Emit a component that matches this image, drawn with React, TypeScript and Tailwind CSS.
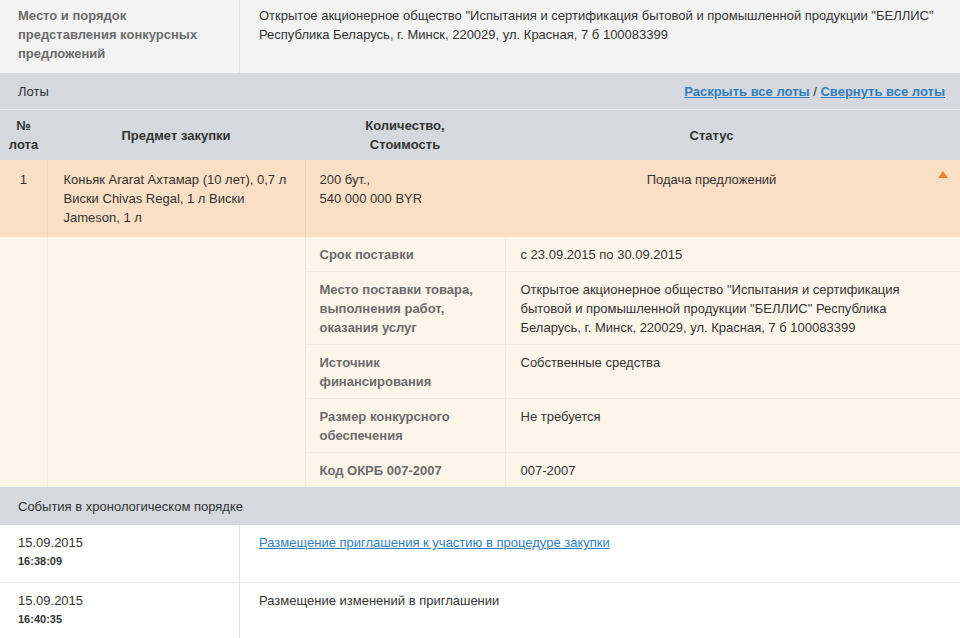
const font = { fontFamily: '"Liberation Sans", Arial, sans-serif' };

const details = [
  { label: "Срок поставки", value: "с 23.09.2015 по 30.09.2015" },
  {
    label: "Место поставки товара, выполнения работ, оказания услуг",
    value:
      'Открытое акционерное общество "Испытания и сертификация бытовой и промышленной продукции "БЕЛЛИС" Республика Беларусь, г. Минск, 220029, ул. Красная, 7 б 100083399',
  },
  { label: "Источник финансирования", value: "Собственные средства" },
  { label: "Размер конкурсного обеспечения", value: "Не требуется" },
  { label: "Код ОКРБ 007-2007", value: "007-2007" },
];

const events = [
  {
    date: "15.09.2015",
    time: "16:38:09",
    text: "Размещение приглашения к участию в процедуре закупки",
    link: true,
  },
  {
    date: "15.09.2015",
    time: "16:40:35",
    text: "Размещение изменений в приглашении",
    link: false,
  },
];

export default function App() {
  return (
    <div className="min-h-[638px] w-[960px] overflow-hidden bg-white text-[13px] leading-[19px] text-[#333]" style={font}>
      {/* place and order row */}
      <div className="flex bg-[#f3f3f3]">
        <div className="w-[240px] shrink-0 border-r border-[#e2e2e2] pl-[18px] pr-[16px] pt-[6px] pb-[10px] font-bold text-[#6b6b6b]">
          Место и порядок представления конкурсных предложений
        </div>
        <div className="flex-1 pl-[19px] pr-[10px] pt-[6px] pb-[10px]">
          Открытое акционерное общество "Испытания и сертификация бытовой и промышленной продукции "БЕЛЛИС"
          <br />
          Республика Беларусь, г. Минск, 220029, ул. Красная, 7 б 100083399
        </div>
      </div>

      {/* lots */}
      <div className="flex h-[37px] items-center justify-between border-b border-[#e4e7eb] bg-[#d5d9df] pl-[18px] pr-[15px]">
        <span>Лоты</span>
        <span>
          <a href="#" className="font-bold text-[#2f7fbf] underline">
            Раскрыть все лоты
          </a>{" "}
          /{" "}
          <a href="#" className="font-bold text-[#2f7fbf] underline">
            Свернуть все лоты
          </a>
        </span>
      </div>

      <table className="w-full table-fixed border-collapse">
        <colgroup>
          <col className="w-[47px]" />
          <col className="w-[258px]" />
          <col className="w-[200px]" />
          <col className="w-[413px]" />
          <col className="w-[42px]" />
        </colgroup>
        <thead>
          <tr className="h-[50px] bg-[#d5d9df] font-bold">
            <th className="px-[2px] py-[6px] text-center">
              №<br />
              лота
            </th>
            <th className="py-[6px] text-center">Предмет закупки</th>
            <th className="py-[6px] text-center">
              Количество,
              <br />
              Стоимость
            </th>
            <th className="py-[6px] text-center">Статус</th>
            <th />
          </tr>
        </thead>
        <tbody>
          <tr className="bg-[#fbdfc4] align-top">
            <td className="py-[10px] text-center">1</td>
            <td className="border-l border-[#f6d4b4] py-[10px] pl-[16px] pr-[12px]">
              Коньяк Ararat Ахтамар (10 лет), 0,7 л Виски Chivas Regal, 1 л Виски Jameson, 1 л
            </td>
            <td className="border-l border-[#f6d4b4] py-[10px] pl-[14px] pr-[10px]">
              200 бут.,
              <br />
              540 000 000 BYR
            </td>
            <td className="py-[10px] text-center">Подача предложений</td>
            <td className="pt-[11px] pr-[12px]">
              <svg width="10" height="7" viewBox="0 0 10 7" className="ml-auto block">
                <path d="M5 0 L10 7 L0 7 Z" fill="#e8822e" />
              </svg>
            </td>
          </tr>
          {details.map((d, i) => (
            <tr key={d.label} className="bg-[#fdf5ea] align-top">
              {i === 0 && (
                <>
                  <td rowSpan={details.length} className="border-r border-[#f5ebdd]" />
                  <td rowSpan={details.length} className="border-r border-[#f5ebdd]" />
                </>
              )}
              <td
                className={`border-r border-[#f5ebdd] pl-[14px] pr-[30px] pt-[8px] pb-[7px] font-bold text-[#6b6b6b] ${
                  i > 0 ? "border-t" : ""
                }`}
              >
                {d.label}
              </td>
              <td
                colSpan={2}
                className={`border-[#f5ebdd] pl-[15px] pr-[15px] pt-[8px] pb-[7px] ${i > 0 ? "border-t" : ""}`}
              >
                {d.value}
              </td>
            </tr>
          ))}
        </tbody>
      </table>

      {/* events */}
      <div className="flex h-[38px] items-center bg-[#d5d9df] pl-[18px]">События в хронологическом порядке</div>
      {events.map((e) => (
        <div key={e.time} className="flex border-b border-[#e6e6e6] bg-white">
          <div className="w-[240px] shrink-0 border-r border-[#e2e2e2] pl-[18px] pt-[8px] pb-[11px]">
            <div>{e.date}</div>
            <div className="text-[11px] font-bold">{e.time}</div>
          </div>
          <div className="flex-1 pl-[19px] pt-[8px]">
            {e.link ? (
              <a href="#" className="text-[#2f7fbf] underline">
                {e.text}
              </a>
            ) : (
              e.text
            )}
          </div>
        </div>
      ))}
    </div>
  );
}
